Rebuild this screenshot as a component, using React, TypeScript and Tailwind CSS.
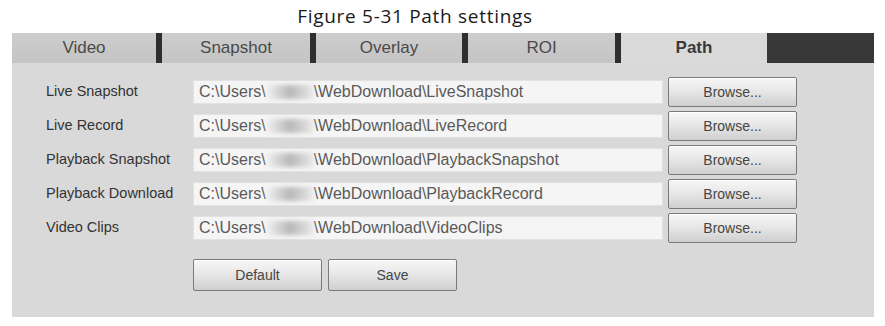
const tabs = [
  { label: "Video", w: "w-[144px]" },
  { label: "Snapshot", w: "w-[148px]" },
  { label: "Overlay", w: "w-[146px]" },
  { label: "ROI", w: "w-[147px]" },
];

const rows = [
  { label: "Live Snapshot", dir: "LiveSnapshot" },
  { label: "Live Record", dir: "LiveRecord" },
  { label: "Playback Snapshot", dir: "PlaybackSnapshot" },
  { label: "Playback Download", dir: "PlaybackRecord" },
  { label: "Video Clips", dir: "VideoClips" },
];

function Btn({ children, className = "" }: { children: string; className?: string }) {
  return (
    <button
      className={`flex items-center justify-center rounded-[2px] border border-[#7a7a7a] bg-gradient-to-b from-[#f7f7f7] via-[#e6e6e6] to-[#cfcfcf] text-[14px] text-[#454545] shadow-[inset_0_1px_0_#ffffff] ${className}`}
    >
      {children}
    </button>
  );
}

export default function App() {
  return (
    <div className="h-[326px] w-[885px] overflow-hidden bg-white font-['Liberation_Sans',Arial,sans-serif]">
      {/* caption */}
      <div className="flex h-[33px] w-[830px] items-center justify-center font-['Open_Sans',sans-serif] text-[19px] tracking-[0.7px] text-[#1a1a1a]">
        Figure 5-31 Path settings
      </div>

      <div className="ml-[12px] h-[284px] w-[862px] bg-[#d9d9d9]">
        {/* tab bar */}
        <div className="flex h-[30px]">
          {tabs.map((t) => (
            <div key={t.label} className="flex">
              <div
                className={`flex ${t.w} items-center justify-center bg-gradient-to-b from-[#cdcdcd] to-[#c4c4c4] text-[17px] text-[#4a4a4a]`}
              >
                {t.label}
              </div>
              <div className="w-[6px] bg-[#2e2e2e]" />
            </div>
          ))}
          <div className="flex w-[146px] items-center justify-center bg-[#dadada] text-[17px] font-bold text-[#3a3a3a]">
            Path
          </div>
          <div className="flex-1 bg-[#383838]" />
        </div>

        {/* path rows */}
        <div className="flex flex-col gap-[4px] pl-[34px] pt-[14px]">
          {rows.map((r) => (
            <div key={r.label} className="flex h-[30px] items-center">
              <div className="w-[147px] text-[14.5px] text-[#333333]">{r.label}</div>
              <div className="flex h-[24px] w-[470px] items-center border border-[#e2e2e2] bg-[#f5f5f5] pl-[5px] text-[16px] text-[#5a5a5a]">
                <span>C:\Users\</span>
                <span className="mx-[1px] inline-block h-[14px] w-[46px] bg-gradient-to-r from-[#f0f0f0] via-[#b8b8b8] to-[#e8e8e8] blur-[2px]" />
                <span>\WebDownload\{r.dir}</span>
              </div>
              <Btn className="ml-[5px] h-[30px] w-[129px]">Browse...</Btn>
            </div>
          ))}

          <div className="mt-[12px] flex gap-[6px] pl-[147px]">
            <Btn className="h-[32px] w-[129px]">Default</Btn>
            <Btn className="h-[32px] w-[129px]">Save</Btn>
          </div>
        </div>
      </div>
    </div>
  );
}
